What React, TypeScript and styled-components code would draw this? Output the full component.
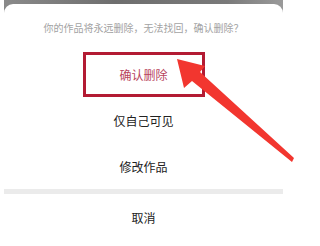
import React from "react";
import styled, { createGlobalStyle } from "styled-components";

const GlobalStyle = createGlobalStyle`
  html, body {
    margin: 0;
    padding: 0;
    background: #ffffff;
  }
  body {
    font-family: "Noto Sans CJK SC", "Noto Sans", sans-serif;
  }
`;

const Page = styled.div`
  position: relative;
  width: 298px;
  height: 246px;
  overflow: hidden;
  background: #ffffff;
`;

const Backdrop = styled.div`
  margin-left: 4px;
  width: 279px;
  padding-top: 4px;
  background: linear-gradient(90deg, #8a8a8a, #6e6e6e 40%, #7a7a7a 80%, #9a9a9a);
`;

const Sheet = styled.div`
  display: flex;
  flex-direction: column;
  background: #ffffff;
  border-radius: 9px 9px 0 0;
`;

const Notice = styled.div`
  height: 47px;
  display: flex;
  align-items: center;
  justify-content: center;
  font-size: 10px;
  color: #a3a3a3;
`;

const Row = styled.div<{ $danger?: boolean }>`
  height: 46px;
  display: flex;
  align-items: center;
  justify-content: center;
  font-size: 12px;
  color: ${(p) => (p.$danger ? "#b8445c" : "#222222")};
`;

const Highlight = styled.div`
  box-sizing: border-box;
  width: 122px;
  height: 45px;
  display: flex;
  align-items: center;
  justify-content: center;
  border: 3px solid #b31b33;
`;

const Divider = styled.div`
  height: 5px;
  background: #ebebeb;
`;

const Arrow = styled.svg`
  position: absolute;
  left: 0;
  top: 0;
  pointer-events: none;
`;

const items = ["仅自己可见", "修改作品"];

export default function App() {
  return (
    <Page>
      <GlobalStyle />
      <Backdrop>
        <Sheet>
          <Notice>你的作品将永远删除，无法找回，确认删除？</Notice>
          <Row $danger>
            <Highlight>确认删除</Highlight>
          </Row>
          {items.map((label) => (
            <Row key={label}>{label}</Row>
          ))}
          <Divider />
          <Row>取消</Row>
        </Sheet>
      </Backdrop>
      <Arrow width="298" height="246" viewBox="0 0 298 246">
        <polygon
          points="177,59 205,66 200,72 294,158 292,162 192,81 184,88"
          fill="#f2362f"
        />
      </Arrow>
    </Page>
  );
}
